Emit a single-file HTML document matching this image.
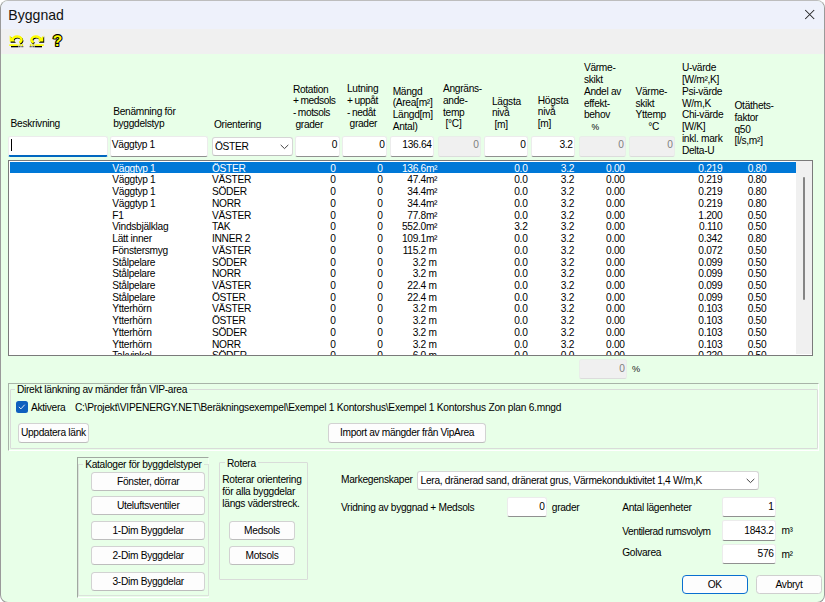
<!DOCTYPE html>
<html lang="sv">
<head>
<meta charset="utf-8">
<title>Byggnad</title>
<style>
html,body{margin:0;padding:0;}
body{width:825px;height:602px;overflow:hidden;background:#fff;position:relative;font-family:"Liberation Sans",sans-serif;}
.win{position:absolute;left:0;top:0;width:824.8px;height:602.8px;border:1px solid #9a9a9a;border-top-color:#bdbdbd;border-radius:8px;background:#e8ffe8;overflow:hidden;box-sizing:border-box;}
.abs,.t,.in,.btn,.ln{position:absolute;box-sizing:border-box;}
.t{font-size:10.2px;line-height:11.77px;letter-spacing:-0.3px;white-space:pre;color:#000;}
.ws{word-spacing:-0.4px;letter-spacing:-0.42px}
.title{position:absolute;left:-1px;top:-1px;width:825px;height:29px;background:#eef1fb;}
.title span{position:absolute;left:8.3px;top:5px;font-size:14.1px;line-height:20px;color:#111;}
.tool{position:absolute;left:-1px;top:28px;width:825px;height:25px;background:#f0f0f0;}
.in{height:21px;background:#fff;border:1px solid #ececec;border-bottom:1px solid #909090;border-radius:2.5px;font-size:10.2px;line-height:11.77px;letter-spacing:-0.3px;padding:2.2px 1.3px 0 0.8px;white-space:pre;color:#000;overflow:hidden;}
.in.combo{border:1px solid #d6d6d6;border-bottom-color:#bcbcbc;border-radius:3px;}
.in.r{text-align:right;}
.in.dis{background:#f0f0f0;color:#7f7f7f;border:1px solid #e9eee9;border-bottom:1px solid #dcdcdc;}
.in.foc{border-bottom:2px solid #0067c0;}
.btn{background:#fdfdfd;border:1px solid #d2d2d2;border-bottom-color:#bdbdbd;border-radius:3.5px;font-size:10.2px;letter-spacing:-0.3px;text-align:center;color:#000;white-space:pre;}
.list{position:absolute;left:8px;top:160px;width:805px;height:196px;border:1px solid #7a7a7a;background:#fff;overflow:hidden;box-sizing:border-box;}
.row{position:absolute;left:0;width:803px;height:12px;font-size:10.2px;line-height:12px;letter-spacing:-0.3px;white-space:pre;color:#000;}
.row.sel{color:#fff;}
.selbg{position:absolute;left:1px;top:1px;width:786px;height:11px;background:#0078d7;}
.c{position:absolute;top:0;}
.sb{position:absolute;right:0;top:0;width:16.5px;height:193px;background:#f0f0f0;}
.sb i{position:absolute;left:7.5px;top:16px;width:2px;height:123px;background:#858585;border-radius:1px;}
</style>
</head>
<body>
<div class="win">
<div class="title"><span>Byggnad</span>
<svg class="abs" style="left:803px;top:8px" width="13" height="13" viewBox="0 0 13 13"><path d="M2.2 2 L11.2 11 M11.2 2 L2.2 11" stroke="#222" stroke-width="1.05" fill="none"/></svg>
</div>
<div class="tool">
<svg class="abs" style="left:9px;top:4.6px" width="16" height="15" viewBox="0 0 16 15">
<g>
 <path d="M0.7 1.4 L0.7 7.6 L6 7.6 Z" fill="#000" transform="translate(0.9,1.1)"/>
 <path d="M3.4 5.8 C4.4 2.6 8 1.9 10.4 2.9 C13.3 4.2 13.3 7.4 10.3 8.5" stroke="#000" stroke-width="2.5" fill="none" transform="translate(0.6,0.9)"/>
 <path d="M0.7 1.4 L0.7 7.6 L6 7.6 Z" fill="#ffff00"/>
 <path d="M3.4 5.8 C4.4 2.6 8 1.9 10.4 2.9 C13.3 4.2 13.3 7.4 10.3 8.5" stroke="#ffff00" stroke-width="2.5" fill="none"/>
 <rect x="2" y="11.8" width="7.4" height="1.5" fill="#000"/>
 <rect x="0.3" y="10.3" width="8.3" height="1.7" fill="#ffff00"/>
 <path d="M9.6 11.1h1.1M11.3 11.1h1.1M13 11.1h1.1" stroke="#eaea00" stroke-width="1.7"/>
 <path d="M9.8 12.6h1.1M11.5 12.6h1.1M13.2 12.6h1.1" stroke="#444" stroke-width="1.2"/>
</g>
</svg>
<svg class="abs" style="left:29px;top:4.6px" width="16" height="15" viewBox="0 0 16 15">
<g transform="translate(15,0) scale(-1,1)">
 <path d="M0.7 1.4 L0.7 7.6 L6 7.6 Z" fill="#000" transform="translate(-0.9,1.1)"/>
 <path d="M3.4 5.8 C4.4 2.6 8 1.9 10.4 2.9 C13.3 4.2 13.3 7.4 10.3 8.5" stroke="#000" stroke-width="2.5" fill="none" transform="translate(-0.6,0.9)"/>
 <path d="M0.7 1.4 L0.7 7.6 L6 7.6 Z" fill="#ffff00"/>
 <path d="M3.4 5.8 C4.4 2.6 8 1.9 10.4 2.9 C13.3 4.2 13.3 7.4 10.3 8.5" stroke="#ffff00" stroke-width="2.5" fill="none"/>
 <rect x="2" y="11.8" width="7.4" height="1.5" fill="#000"/>
 <rect x="0.3" y="10.3" width="8.3" height="1.7" fill="#ffff00"/>
 <path d="M9.6 11.1h1.1M11.3 11.1h1.1M13 11.1h1.1" stroke="#eaea00" stroke-width="1.7"/>
 <path d="M9.8 12.6h1.1M11.5 12.6h1.1M13.2 12.6h1.1" stroke="#444" stroke-width="1.2"/>
</g>
</svg>
<svg class="abs" style="left:49.2px;top:1px" width="16" height="20" viewBox="0 0 16 20" text-rendering="geometricPrecision"><text x="8.6" y="16.4" text-anchor="middle" font-family="Liberation Sans, sans-serif" font-weight="bold" font-size="15.5" fill="#ffff00" stroke="#000" stroke-width="2.2" stroke-linejoin="round" paint-order="stroke">?</text></svg>
</div>

<!-- column headers -->
<div class="t" style="left:9.6px;top:117.1px">Beskrivning</div>
<div class="t" style="left:112.2px;top:105.4px">Benämning för
byggdelstyp</div>
<div class="t" style="left:213px;top:117.8px">Orientering</div>
<div class="t" style="left:291.9px;top:82.5px">Rotation
<span class="ws">+ medsols
- motsols</span>
 grader</div>
<div class="t" style="left:346px;top:82.0px">Lutning
<span class="ws">+ uppåt
- nedåt</span>
 grader</div>
<div class="t" style="left:391.7px;top:84.7px">Mängd
(Area[m²]
Längd[m]
Antal)</div>
<div class="t" style="left:442px;top:82.0px">Angräns-
ande-
temp
 [°C]</div>
<div class="t" style="left:491px;top:94.7px">Lägsta
nivå
 [m]</div>
<div class="t" style="left:536.8px;top:93.6px">Högsta
nivå
[m]</div>
<div class="t" style="left:582.9px;top:61.4px">Värme-
skikt
Andel av
effekt-
behov
   <span style="font-size:8.6px">%</span></div>
<div class="t" style="left:634.5px;top:84.9px">Värme-
skikt
Yttemp
     °C</div>
<div class="t" style="left:680.9px;top:61.4px">U-värde
[W/m²,K]
Psi-värde
W/m,K
Chi-värde
[W/K]
inkl. mark
Delta-U</div>
<div class="t" style="left:733.5px;top:99.2px">Otäthets-
faktor
q50
[l/s,m²]</div>

<!-- inputs row -->
<div class="in foc" style="left:7px;top:135px;width:100px"><i class="abs" style="left:2px;top:2px;width:1px;height:12px;background:#000"></i></div>
<div class="in" style="left:109px;top:135px;width:98px">Väggtyp 1</div>
<div class="in combo" style="left:211px;top:136px;width:81px;height:18.6px;padding-top:3.4px;padding-left:2px">ÖSTER<svg class="abs" style="right:3.4px;top:5.8px" width="9" height="6" viewBox="0 0 9 6"><path d="M0.7 0.9 L4.5 4.6 L8.3 0.9" stroke="#444" stroke-width="1" fill="none"/></svg></div>
<div class="in r" style="left:294px;top:135px;width:45px;padding-right:2px">0</div>
<div class="in r" style="left:341px;top:135px;width:45px">0</div>
<div class="in r" style="left:389px;top:135px;width:44px">136.64</div>
<div class="in r dis" style="left:437px;top:135px;width:43px">0</div>
<div class="in r" style="left:483px;top:135px;width:44px">0</div>
<div class="in r" style="left:530px;top:135px;width:44px">3.2</div>
<div class="in r dis" style="left:578px;top:135px;width:47px">0</div>
<div class="in r dis" style="left:628px;top:135px;width:46px">0</div>

<!-- list -->
<div class="list" style="left:7px;top:159px">
<div class="selbg"></div>
<div class="row sel" style="top:2px"><span class="c" style="left:103.3px">Väggtyp 1</span><span class="c" style="left:203.0px">ÖSTER</span><span class="c" style="right:476.4px">0</span><span class="c" style="right:429.4px">0</span><span class="c" style="right:386.1px">136.6</span><span class="c" style="left:416.9px">m²</span><span class="c" style="right:284.5px">0.0</span><span class="c" style="right:237.9px">3.2</span><span class="c" style="right:187.3px">0.00</span><span class="c" style="right:89.7px">0.219</span><span class="c" style="right:45.7px">0.80</span></div>
<div class="row" style="top:13px"><span class="c" style="left:103.3px">Väggtyp 1</span><span class="c" style="left:203.0px">VÄSTER</span><span class="c" style="right:476.4px">0</span><span class="c" style="right:429.4px">0</span><span class="c" style="right:386.1px">47.4</span><span class="c" style="left:416.9px">m²</span><span class="c" style="right:284.5px">0.0</span><span class="c" style="right:237.9px">3.2</span><span class="c" style="right:187.3px">0.00</span><span class="c" style="right:89.7px">0.219</span><span class="c" style="right:45.7px">0.80</span></div>
<div class="row" style="top:25px"><span class="c" style="left:103.3px">Väggtyp 1</span><span class="c" style="left:203.0px">SÖDER</span><span class="c" style="right:476.4px">0</span><span class="c" style="right:429.4px">0</span><span class="c" style="right:386.1px">34.4</span><span class="c" style="left:416.9px">m²</span><span class="c" style="right:284.5px">0.0</span><span class="c" style="right:237.9px">3.2</span><span class="c" style="right:187.3px">0.00</span><span class="c" style="right:89.7px">0.219</span><span class="c" style="right:45.7px">0.80</span></div>
<div class="row" style="top:37px"><span class="c" style="left:103.3px">Väggtyp 1</span><span class="c" style="left:203.0px">NORR</span><span class="c" style="right:476.4px">0</span><span class="c" style="right:429.4px">0</span><span class="c" style="right:386.1px">34.4</span><span class="c" style="left:416.9px">m²</span><span class="c" style="right:284.5px">0.0</span><span class="c" style="right:237.9px">3.2</span><span class="c" style="right:187.3px">0.00</span><span class="c" style="right:89.7px">0.219</span><span class="c" style="right:45.7px">0.80</span></div>
<div class="row" style="top:49px"><span class="c" style="left:103.3px">F1</span><span class="c" style="left:203.0px">VÄSTER</span><span class="c" style="right:476.4px">0</span><span class="c" style="right:429.4px">0</span><span class="c" style="right:386.1px">77.8</span><span class="c" style="left:416.9px">m²</span><span class="c" style="right:284.5px">0.0</span><span class="c" style="right:237.9px">3.2</span><span class="c" style="right:187.3px">0.00</span><span class="c" style="right:89.7px">1.200</span><span class="c" style="right:45.7px">0.50</span></div>
<div class="row" style="top:60px"><span class="c" style="left:103.3px">Vindsbjälklag</span><span class="c" style="left:203.0px">TAK</span><span class="c" style="right:476.4px">0</span><span class="c" style="right:429.4px">0</span><span class="c" style="right:386.1px">552.0</span><span class="c" style="left:416.9px">m²</span><span class="c" style="right:284.5px">3.2</span><span class="c" style="right:237.9px">3.2</span><span class="c" style="right:187.3px">0.00</span><span class="c" style="right:89.7px">0.110</span><span class="c" style="right:45.7px">0.50</span></div>
<div class="row" style="top:72px"><span class="c" style="left:103.3px">Lätt inner</span><span class="c" style="left:203.0px">INNER 2</span><span class="c" style="right:476.4px">0</span><span class="c" style="right:429.4px">0</span><span class="c" style="right:386.1px">109.1</span><span class="c" style="left:416.9px">m²</span><span class="c" style="right:284.5px">0.0</span><span class="c" style="right:237.9px">3.2</span><span class="c" style="right:187.3px">0.00</span><span class="c" style="right:89.7px">0.342</span><span class="c" style="right:45.7px">0.80</span></div>
<div class="row" style="top:84px"><span class="c" style="left:103.3px">Fönstersmyg</span><span class="c" style="left:203.0px">VÄSTER</span><span class="c" style="right:476.4px">0</span><span class="c" style="right:429.4px">0</span><span class="c" style="right:386.1px">115.2</span><span class="c" style="left:416.9px">&nbsp;m</span><span class="c" style="right:284.5px">0.0</span><span class="c" style="right:237.9px">3.2</span><span class="c" style="right:187.3px">0.00</span><span class="c" style="right:89.7px">0.072</span><span class="c" style="right:45.7px">0.50</span></div>
<div class="row" style="top:96px"><span class="c" style="left:103.3px">Stålpelare</span><span class="c" style="left:203.0px">SÖDER</span><span class="c" style="right:476.4px">0</span><span class="c" style="right:429.4px">0</span><span class="c" style="right:386.1px">3.2</span><span class="c" style="left:416.9px">&nbsp;m</span><span class="c" style="right:284.5px">0.0</span><span class="c" style="right:237.9px">3.2</span><span class="c" style="right:187.3px">0.00</span><span class="c" style="right:89.7px">0.099</span><span class="c" style="right:45.7px">0.50</span></div>
<div class="row" style="top:107px"><span class="c" style="left:103.3px">Stålpelare</span><span class="c" style="left:203.0px">NORR</span><span class="c" style="right:476.4px">0</span><span class="c" style="right:429.4px">0</span><span class="c" style="right:386.1px">3.2</span><span class="c" style="left:416.9px">&nbsp;m</span><span class="c" style="right:284.5px">0.0</span><span class="c" style="right:237.9px">3.2</span><span class="c" style="right:187.3px">0.00</span><span class="c" style="right:89.7px">0.099</span><span class="c" style="right:45.7px">0.50</span></div>
<div class="row" style="top:119px"><span class="c" style="left:103.3px">Stålpelare</span><span class="c" style="left:203.0px">VÄSTER</span><span class="c" style="right:476.4px">0</span><span class="c" style="right:429.4px">0</span><span class="c" style="right:386.1px">22.4</span><span class="c" style="left:416.9px">&nbsp;m</span><span class="c" style="right:284.5px">0.0</span><span class="c" style="right:237.9px">3.2</span><span class="c" style="right:187.3px">0.00</span><span class="c" style="right:89.7px">0.099</span><span class="c" style="right:45.7px">0.50</span></div>
<div class="row" style="top:131px"><span class="c" style="left:103.3px">Stålpelare</span><span class="c" style="left:203.0px">ÖSTER</span><span class="c" style="right:476.4px">0</span><span class="c" style="right:429.4px">0</span><span class="c" style="right:386.1px">22.4</span><span class="c" style="left:416.9px">&nbsp;m</span><span class="c" style="right:284.5px">0.0</span><span class="c" style="right:237.9px">3.2</span><span class="c" style="right:187.3px">0.00</span><span class="c" style="right:89.7px">0.099</span><span class="c" style="right:45.7px">0.50</span></div>
<div class="row" style="top:142px"><span class="c" style="left:103.3px">Ytterhörn</span><span class="c" style="left:203.0px">VÄSTER</span><span class="c" style="right:476.4px">0</span><span class="c" style="right:429.4px">0</span><span class="c" style="right:386.1px">3.2</span><span class="c" style="left:416.9px">&nbsp;m</span><span class="c" style="right:284.5px">0.0</span><span class="c" style="right:237.9px">3.2</span><span class="c" style="right:187.3px">0.00</span><span class="c" style="right:89.7px">0.103</span><span class="c" style="right:45.7px">0.50</span></div>
<div class="row" style="top:154px"><span class="c" style="left:103.3px">Ytterhörn</span><span class="c" style="left:203.0px">ÖSTER</span><span class="c" style="right:476.4px">0</span><span class="c" style="right:429.4px">0</span><span class="c" style="right:386.1px">3.2</span><span class="c" style="left:416.9px">&nbsp;m</span><span class="c" style="right:284.5px">0.0</span><span class="c" style="right:237.9px">3.2</span><span class="c" style="right:187.3px">0.00</span><span class="c" style="right:89.7px">0.103</span><span class="c" style="right:45.7px">0.50</span></div>
<div class="row" style="top:166px"><span class="c" style="left:103.3px">Ytterhörn</span><span class="c" style="left:203.0px">SÖDER</span><span class="c" style="right:476.4px">0</span><span class="c" style="right:429.4px">0</span><span class="c" style="right:386.1px">3.2</span><span class="c" style="left:416.9px">&nbsp;m</span><span class="c" style="right:284.5px">0.0</span><span class="c" style="right:237.9px">3.2</span><span class="c" style="right:187.3px">0.00</span><span class="c" style="right:89.7px">0.103</span><span class="c" style="right:45.7px">0.50</span></div>
<div class="row" style="top:178px"><span class="c" style="left:103.3px">Ytterhörn</span><span class="c" style="left:203.0px">NORR</span><span class="c" style="right:476.4px">0</span><span class="c" style="right:429.4px">0</span><span class="c" style="right:386.1px">3.2</span><span class="c" style="left:416.9px">&nbsp;m</span><span class="c" style="right:284.5px">0.0</span><span class="c" style="right:237.9px">3.2</span><span class="c" style="right:187.3px">0.00</span><span class="c" style="right:89.7px">0.103</span><span class="c" style="right:45.7px">0.50</span></div>
<div class="row" style="top:189px"><span class="c" style="left:103.3px">Takvinkel</span><span class="c" style="left:203.0px">SÖDER</span><span class="c" style="right:476.4px">0</span><span class="c" style="right:429.4px">0</span><span class="c" style="right:386.1px">6.0</span><span class="c" style="left:416.9px">&nbsp;m</span><span class="c" style="right:284.5px">0.0</span><span class="c" style="right:237.9px">0.0</span><span class="c" style="right:187.3px">0.00</span><span class="c" style="right:89.7px">0.220</span><span class="c" style="right:45.7px">0.50</span></div>
<div class="sb"><i></i></div>
</div>

<div class="in r dis" style="left:578px;top:358px;width:48px;height:20px;padding-top:3px">0</div>
<div class="t" style="left:631px;top:363px;font-size:9.2px;color:#222">%</div>

<!-- link panel -->
<div class="abs" style="left:7px;top:381.8px;width:811px;height:68px;border-top:1px solid #a8b4a8;border-left:1px solid #a8b4a8;border-right:1px solid #fff;border-bottom:1px solid #fff"></div>
<div class="abs" style="left:8.5px;top:388.4px;width:808.5px;height:59.7px;border:1px solid #d9dcd9;border-radius:1px"></div>
<div class="t" style="left:14px;top:383px;background:#e8ffe8;padding:0 2px">Direkt länkning av mänder från VIP-area</div>
<div class="abs" style="left:15.3px;top:400.4px;width:11.4px;height:11.4px;background:#0f5fbe;border-radius:2.5px"><svg class="abs" style="left:0;top:0" width="11.4" height="11.4" viewBox="0 0 12 12"><path d="M3 6.2 L5.2 8.3 L9.2 3.9" stroke="#f0f6ff" stroke-width="0.95" fill="none"/></svg></div>
<div class="t" style="left:30px;top:401.2px">Aktivera</div>
<div class="t" style="left:74px;top:401px;letter-spacing:-0.25px">C:\Projekt\VIPENERGY.NET\Beräkningsexempel\Exempel 1 Kontorshus\Exempel 1 Kontorshus Zon plan 6.mngd</div>
<div class="btn" style="left:16.6px;top:422px;width:71.6px;height:19.6px;line-height:18px">Uppdatera länk</div>
<div class="btn" style="left:327.4px;top:422px;width:157.4px;height:19.6px;line-height:18px;letter-spacing:-0.36px">Import av mängder från VipArea</div>

<!-- kataloger -->
<div class="abs" style="left:76px;top:456px;width:132px;height:140.6px;border-top:1px solid #a0a8a0;border-left:1px solid #a0a8a0;border-right:1px solid #f4fff4;border-bottom:1px solid #fff"></div>
<div class="abs" style="left:77px;top:463px;width:130.6px;height:131.6px;border:1px solid #dbe3db;"></div>
<div class="t" style="left:82.2px;top:457.6px;background:#e8ffe8;padding:0 2px">Kataloger för byggdelstyper</div>
<div class="btn" style="left:90px;top:471px;width:114.4px;height:19px;line-height:17.5px">Fönster, dörrar</div>
<div class="btn" style="left:90px;top:495px;width:114.4px;height:19px;line-height:17.5px">Uteluftsventiler</div>
<div class="btn" style="left:90px;top:520px;width:114.4px;height:19px;line-height:17.5px">1-Dim Byggdelar</div>
<div class="btn" style="left:90px;top:545px;width:114.4px;height:19px;line-height:17.5px">2-Dim Byggdelar</div>
<div class="btn" style="left:90px;top:571px;width:114.4px;height:19px;line-height:17.5px">3-Dim Byggdelar</div>

<!-- rotera -->
<div class="abs" style="left:218.2px;top:461px;width:88.6px;height:118px;border:1px solid #d9dcd9;border-radius:1px"></div>
<div class="t" style="left:224px;top:457.2px;background:#e8ffe8;padding:0 2px">Rotera</div>
<div class="t" style="left:221.3px;top:473.2px">Roterar orientering
för alla byggdelar
längs väderstreck.</div>
<div class="btn" style="left:228px;top:520px;width:66px;height:19px;line-height:17.5px">Medsols</div>
<div class="btn" style="left:228px;top:545px;width:66px;height:19px;line-height:17.5px">Motsols</div>

<!-- right bottom -->
<div class="t" style="left:340px;top:473px">Markegenskaper</div>
<div class="in combo" style="left:416px;top:470px;width:342px;height:18.6px;padding-left:2.6px;padding-top:2.6px">Lera, dränerad sand, dränerat grus, Värmekonduktivitet 1,4 W/m,K<svg class="abs" style="right:3px;top:5.5px" width="9" height="6" viewBox="0 0 9 6"><path d="M0.7 0.9 L4.5 4.6 L8.3 0.9" stroke="#444" stroke-width="1" fill="none"/></svg></div>
<div class="t" style="left:340px;top:500.8px">Vridning av byggnad + Medsols</div>
<div class="in r" style="left:506px;top:496px;width:40px;height:20px;padding-top:2.6px">0</div>
<div class="t" style="left:550.8px;top:500.8px">grader</div>

<div class="t" style="left:621.2px;top:501px">Antal lägenheter</div>
<div class="in r" style="left:721px;top:496px;width:54px;height:20px;padding-top:3.4px">1</div>
<div class="t" style="left:621.2px;top:525px;letter-spacing:-0.45px">Ventilerad rumsvolym</div>
<div class="in r" style="left:721px;top:519px;width:54px;height:21px;padding-top:3.6px">1843.2</div>
<div class="t" style="left:780.4px;top:524.4px">m³</div>
<div class="t" style="left:621.2px;top:546.4px">Golvarea</div>
<div class="in r" style="left:721px;top:543px;width:54px;height:20px;padding-top:3px">576</div>
<div class="t" style="left:780.4px;top:548px">m²</div>

<div class="btn" style="left:680.7px;top:574.2px;width:66px;height:19px;line-height:17.6px;border:1.5px solid #0a6fd0;border-radius:4px">OK</div>
<div class="btn" style="left:754.8px;top:574px;width:66.4px;height:19.4px;line-height:17.4px;border-color:#cfcfcf">Avbryt</div>
</div>
</body>
</html>
